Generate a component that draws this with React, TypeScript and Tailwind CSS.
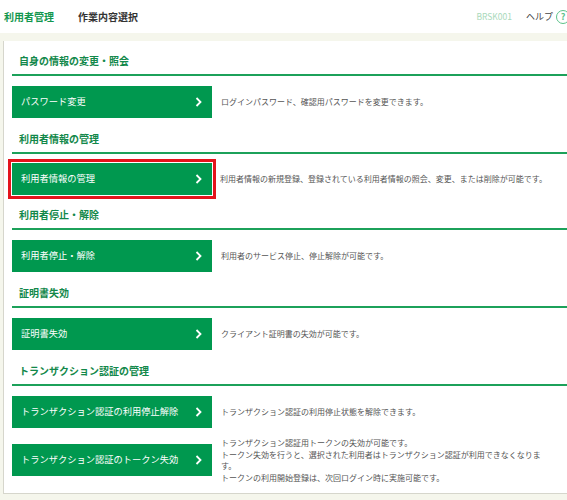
import React from "react";

type Item = { label: string; desc: string[]; selected?: boolean };
type Section = { title: string; items: Item[] };

const sections: Section[] = [
  {
    title: "自身の情報の変更・照会",
    items: [{ label: "パスワード変更", desc: ["ログインパスワード、確認用パスワードを変更できます。"] }],
  },
  {
    title: "利用者情報の管理",
    items: [
      {
        label: "利用者情報の管理",
        desc: ["利用者情報の新規登録、登録されている利用者情報の照会、変更、または削除が可能です。"],
        selected: true,
      },
    ],
  },
  {
    title: "利用者停止・解除",
    items: [{ label: "利用者停止・解除", desc: ["利用者のサービス停止、停止解除が可能です。"] }],
  },
  {
    title: "証明書失効",
    items: [{ label: "証明書失効", desc: ["クライアント証明書の失効が可能です。"] }],
  },
  {
    title: "トランザクション認証の管理",
    items: [
      { label: "トランザクション認証の利用停止解除", desc: ["トランザクション認証の利用停止状態を解除できます。"] },
      {
        label: "トランザクション認証のトークン失効",
        desc: [
          "トランザクション認証用トークンの失効が可能です。",
          "トークン失効を行うと、選択された利用者はトランザクション認証が利用できなくなりま",
          "す。",
          "トークンの利用開始登録は、次回ログイン時に実施可能です。",
        ],
      },
    ],
  },
];

function Chevron() {
  return (
    <svg width="7" height="10" viewBox="0 0 7 10" fill="none" stroke="white" strokeWidth={1.8}>
      <polyline points="1.5,1 5.5,5 1.5,9" />
    </svg>
  );
}

function MenuButton({ item }: { item: Item }) {
  const btn = (
    <button className="flex h-[32px] w-[200px] shrink-0 items-center justify-between bg-[#00984f] pl-[9px] pr-[10px] text-left text-[9.25px] whitespace-nowrap text-white">
      <span>{item.label}</span>
      <Chevron />
    </button>
  );
  return (
    <div className="flex items-center">
      {item.selected ? (
        <div className="-my-[5px] -ml-[4px] -mr-[5px] shrink-0 border-[3px] border-[#e3141c] p-[1px]">{btn}</div>
      ) : (
        btn
      )}
      <div className="ml-[9px] whitespace-nowrap text-[8px] leading-[11.5px] text-[#555]">
        {item.desc.map((d, i) => (
          <div key={i}>{d}</div>
        ))}
      </div>
    </div>
  );
}

export default function App() {
  return (
    <div
      className="h-[500px] w-[567px] overflow-hidden bg-[#f5f6ec]"
      style={{ fontFamily: '"Noto Sans CJK JP", "Noto Sans", sans-serif' }}
    >
      {/* Header */}
      <header className="flex h-[33px] items-center bg-white pl-[4px]">
        <span className="text-[10px] font-bold text-[#12974e]">利用者管理</span>
        <span className="ml-[24px] text-[10px] font-bold text-[#333]">作業内容選択</span>
        <span className="ml-auto text-[8.5px] text-[#a9d9ba]">BRSK001</span>
        <span className="ml-[14px] text-[9px] text-[#444]">ヘルプ</span>
        <span className="-mr-[3px] ml-[3px] flex h-[14px] w-[14px] shrink-0 items-center justify-center rounded-full border-[1.5px] border-[#5cc28a] text-[9px] font-bold leading-none text-[#5cc28a]">
          ?
        </span>
      </header>

      {/* Panel */}
      <div className="ml-[3px] mt-[8px] h-[453px] border-b border-l border-[#d6d6cc] bg-white pl-[8px] pt-[13px]">
        {sections.map((s) => (
          <section key={s.title}>
            <h2 className="border-b-2 border-[#1ca15a] pb-[6px] pl-[7px] text-[10px] font-bold leading-[14px] text-[#12884a]">
              {s.title}
            </h2>
            <div className="flex flex-col gap-[9px] pb-[14px] pt-[10px]">
              {s.items.map((it) => (
                <MenuButton key={it.label} item={it} />
              ))}
            </div>
          </section>
        ))}
      </div>
    </div>
  );
}
